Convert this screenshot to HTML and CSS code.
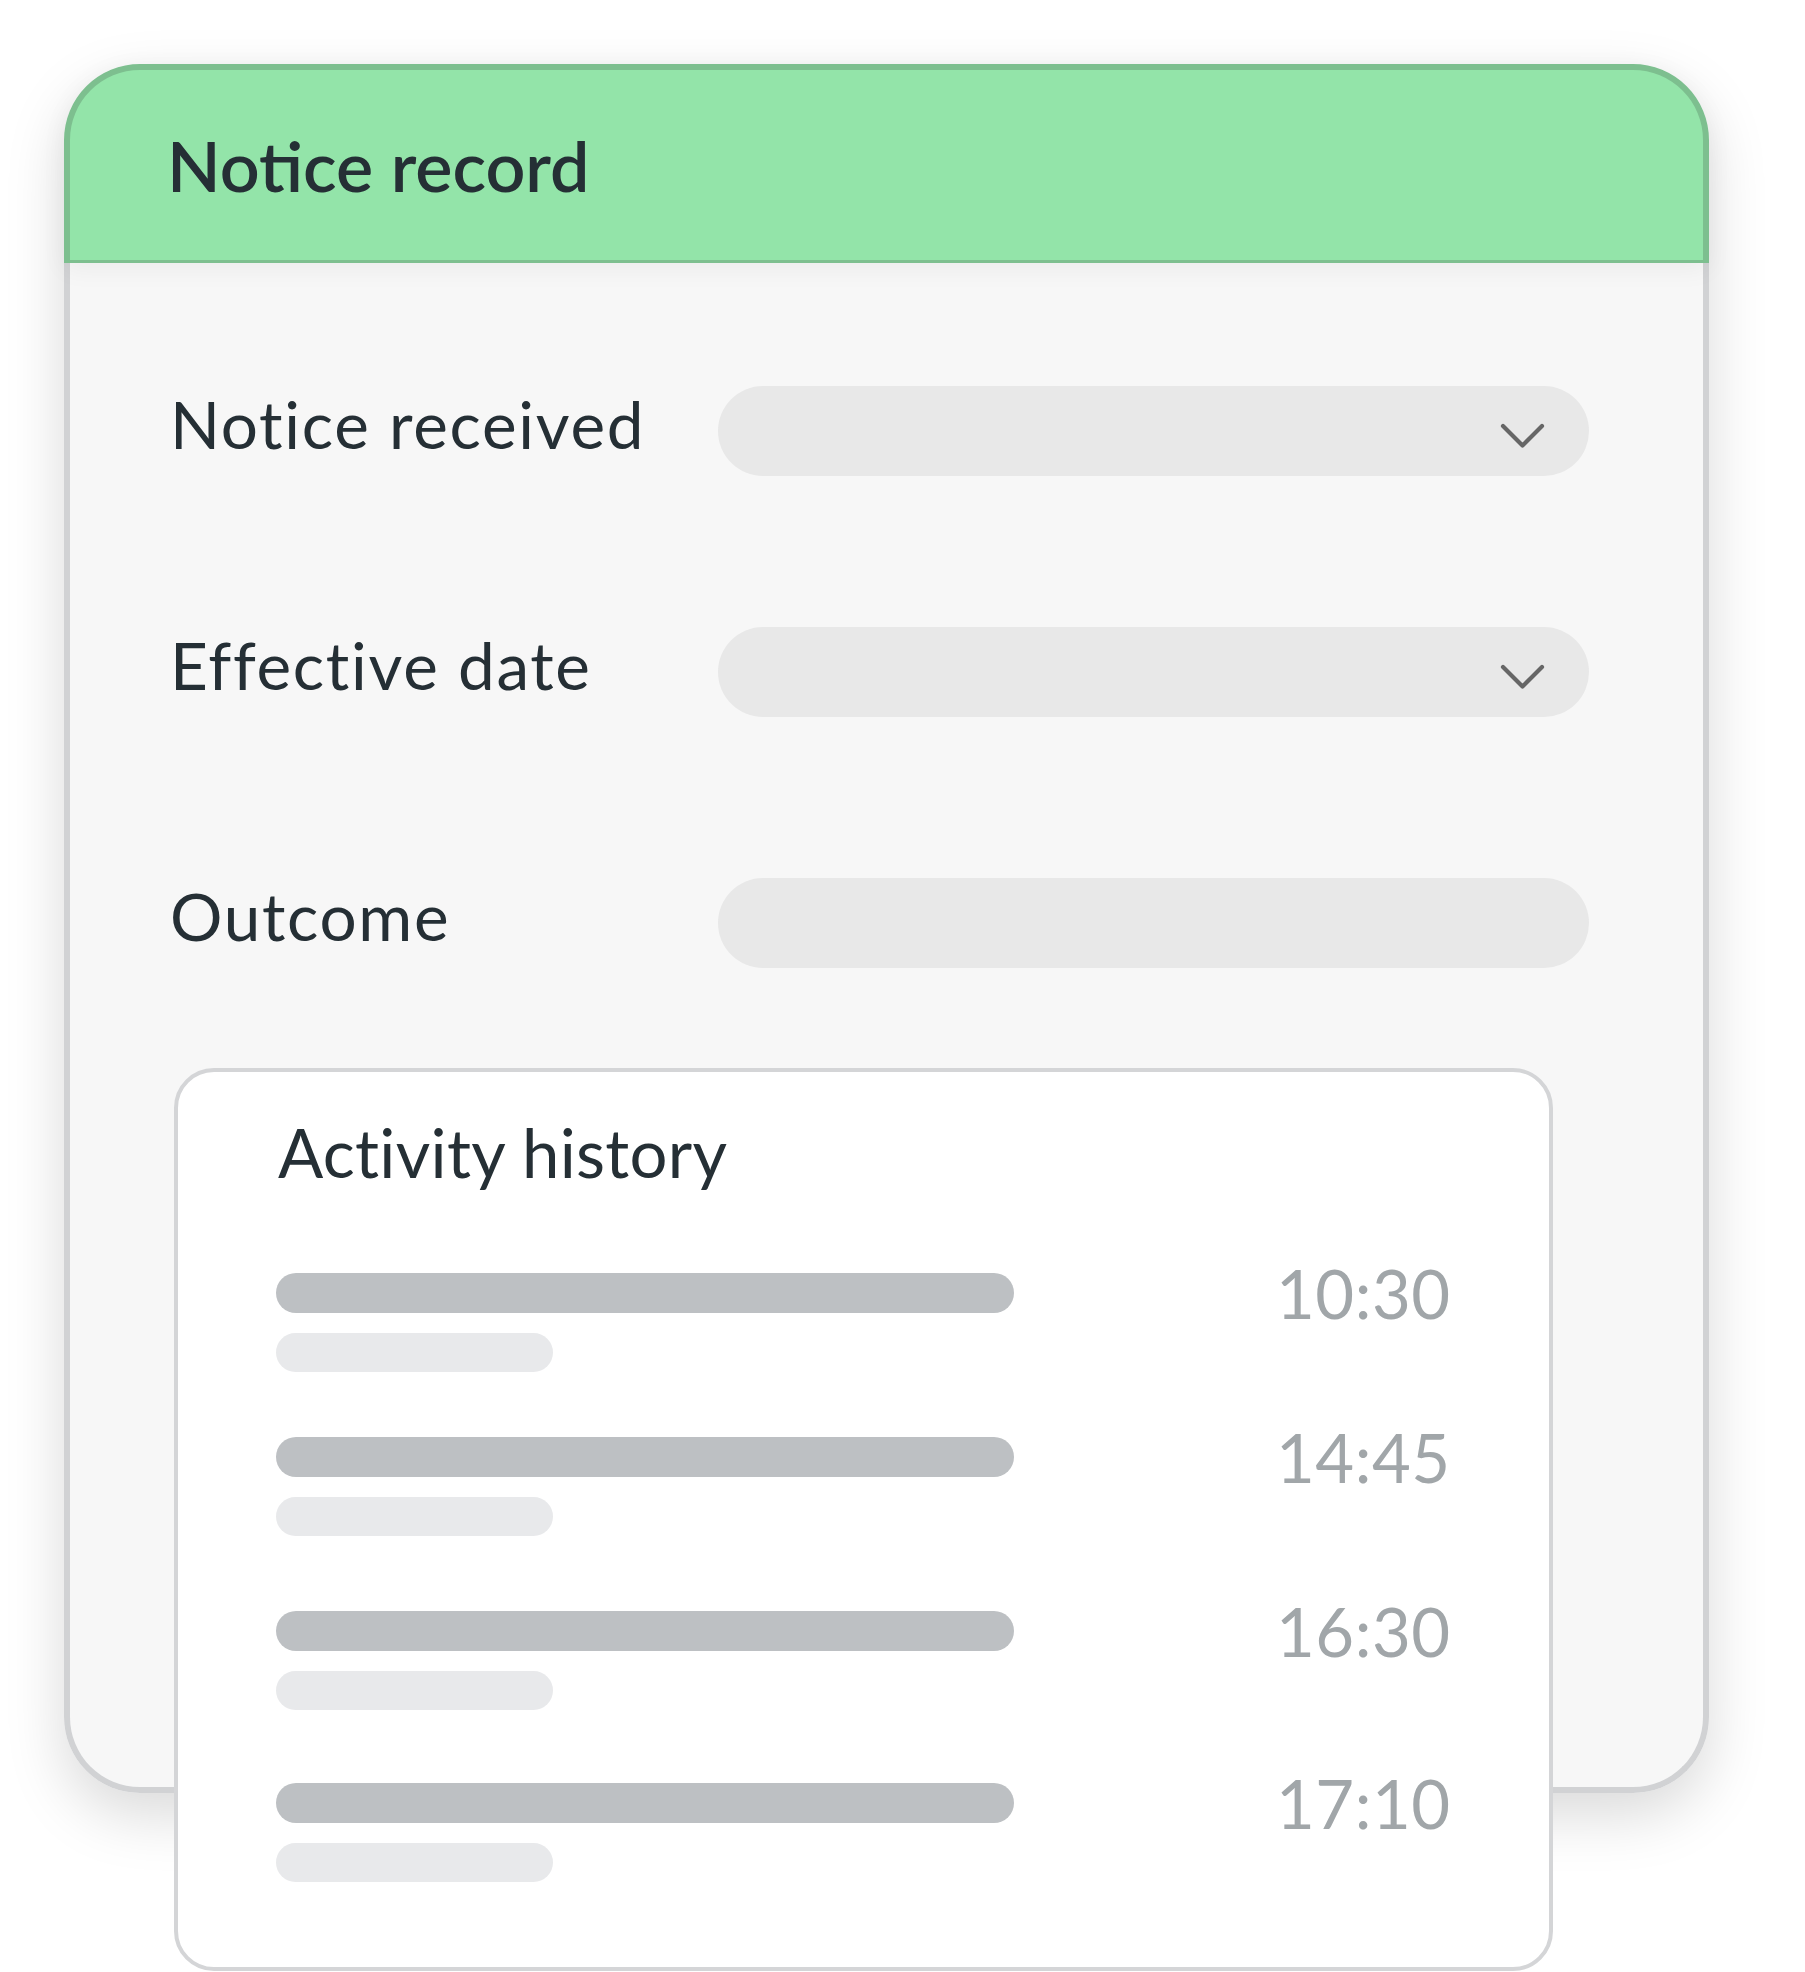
FILE: index.html
```html
<!DOCTYPE html>
<html lang="en">
<head>
<meta charset="utf-8">
<title>Notice record</title>
<link rel="stylesheet" href="styles.css">
</head>
<body>
<div class="page">
  <section class="card">
    <header class="card-head">
      <h1 class="card-title">Notice record</h1>
    </header>
    <div class="card-body">
      <div class="field field-1">
        <span class="label">Notice received</span>
        <div class="select">
          <svg class="chev" width="45" height="26" viewBox="0 0 45 26"><polyline points="3,3 22.5,22.5 42,3" fill="none" stroke="#666666" stroke-width="4.2" stroke-linecap="round" stroke-linejoin="round"/></svg>
        </div>
      </div>
      <div class="field field-2">
        <span class="label">Effective date</span>
        <div class="select">
          <svg class="chev" width="45" height="26" viewBox="0 0 45 26"><polyline points="3,3 22.5,22.5 42,3" fill="none" stroke="#666666" stroke-width="4.2" stroke-linecap="round" stroke-linejoin="round"/></svg>
        </div>
      </div>
      <div class="field field-3">
        <span class="label">Outcome</span>
        <div class="select"></div>
      </div>

      <div class="activity">
        <h2 class="activity-title">Activity history</h2>
        <div class="entry">
          <div class="bars"><div class="bar-main"></div><div class="bar-sub"></div></div>
          <span class="time">10:30</span>
        </div>
        <div class="entry">
          <div class="bars"><div class="bar-main"></div><div class="bar-sub"></div></div>
          <span class="time">14:45</span>
        </div>
        <div class="entry">
          <div class="bars"><div class="bar-main"></div><div class="bar-sub"></div></div>
          <span class="time">16:30</span>
        </div>
        <div class="entry">
          <div class="bars"><div class="bar-main"></div><div class="bar-sub"></div></div>
          <span class="time">17:10</span>
        </div>
      </div>
    </div>
  </section>
</div>
</body>
</html>
```

FILE: styles.css
```css
* { box-sizing: border-box; }

html, body {
  margin: 0;
  padding: 0;
  background: #ffffff;
}

body {
  font-family: Lato, "Noto Sans", sans-serif;
  color: #252f35;
  overflow: hidden;
  height: 1972px;
}

.page {
  padding: 64px 0 0 64px;
}

.card {
  width: 1645px;
  height: 1729px;
  display: flex;
  flex-direction: column;
  border-radius: 76px;
  box-shadow: 0 22px 60px rgba(0, 0, 0, 0.15);
}

.card-head {
  position: relative;
  z-index: 1;
  height: 199px;
  flex: none;
  display: flex;
  align-items: center;
  padding-left: 97px;
  background: #93e4a9;
  border: 6px solid #7dbf8f;
  border-bottom-width: 3px;
  border-radius: 76px 76px 0 0;
  box-shadow: 0 6px 26px rgba(0, 0, 0, 0.05);
}

.card-title {
  margin: 0;
  font-size: 70px;
  line-height: 1;
  font-weight: 600;
  color: #252f35;
}

.card-body {
  flex: 1;
  min-height: 0;
  background: #f7f7f7;
  border: 6px solid #d1d2d4;
  border-top: 0;
  border-radius: 0 0 76px 76px;
  padding: 123px 114px 0 100px;
}

.field {
  display: flex;
  align-items: center;
}

.field-2 { margin-top: 151px; }
.field-3 { margin-top: 161px; }

.label {
  width: 548px;
  flex: none;
  font-size: 65.6px;
  line-height: 1;
  margin-bottom: 14px;
  letter-spacing: 1.7px;
}

.select {
  flex: 1;
  height: 90px;
  border-radius: 45px;
  background: #e8e8e8;
  display: flex;
  align-items: center;
  justify-content: flex-end;
  padding-right: 44px;
}

.chev {
  display: block;
  margin-top: 10px;
}

.activity {
  position: relative;
  z-index: 2;
  margin-top: 100px;
  margin-left: 4px;
  width: 1379px;
  height: 903px;
  background: #ffffff;
  border: 4px solid #d4d5d7;
  border-radius: 40px;
  padding: 47px 0 0 98px;
}

.activity-title {
  margin: 0 0 87px 2px;
  font-size: 67px;
  line-height: 1;
  font-weight: 400;
  color: #252f35;
  letter-spacing: 0.3px;
}

.entry {
  display: flex;
  align-items: flex-start;
}

.entry:nth-of-type(2) { margin-top: 65px; }
.entry:nth-of-type(3) { margin-top: 75px; }
.entry:nth-of-type(4) { margin-top: 73px; }

.bars {
  width: 738px;
  flex: none;
}

.bar-main {
  height: 40px;
  border-radius: 20px;
  background: #bdc0c3;
}

.bar-sub {
  margin-top: 20px;
  width: 277px;
  height: 39px;
  border-radius: 20px;
  background: #e8e9eb;
}

.time {
  margin-left: 262px;
  font-size: 67px;
  line-height: 40px;
  color: #a1a6a9;
  letter-spacing: 0.5px;
}
```
